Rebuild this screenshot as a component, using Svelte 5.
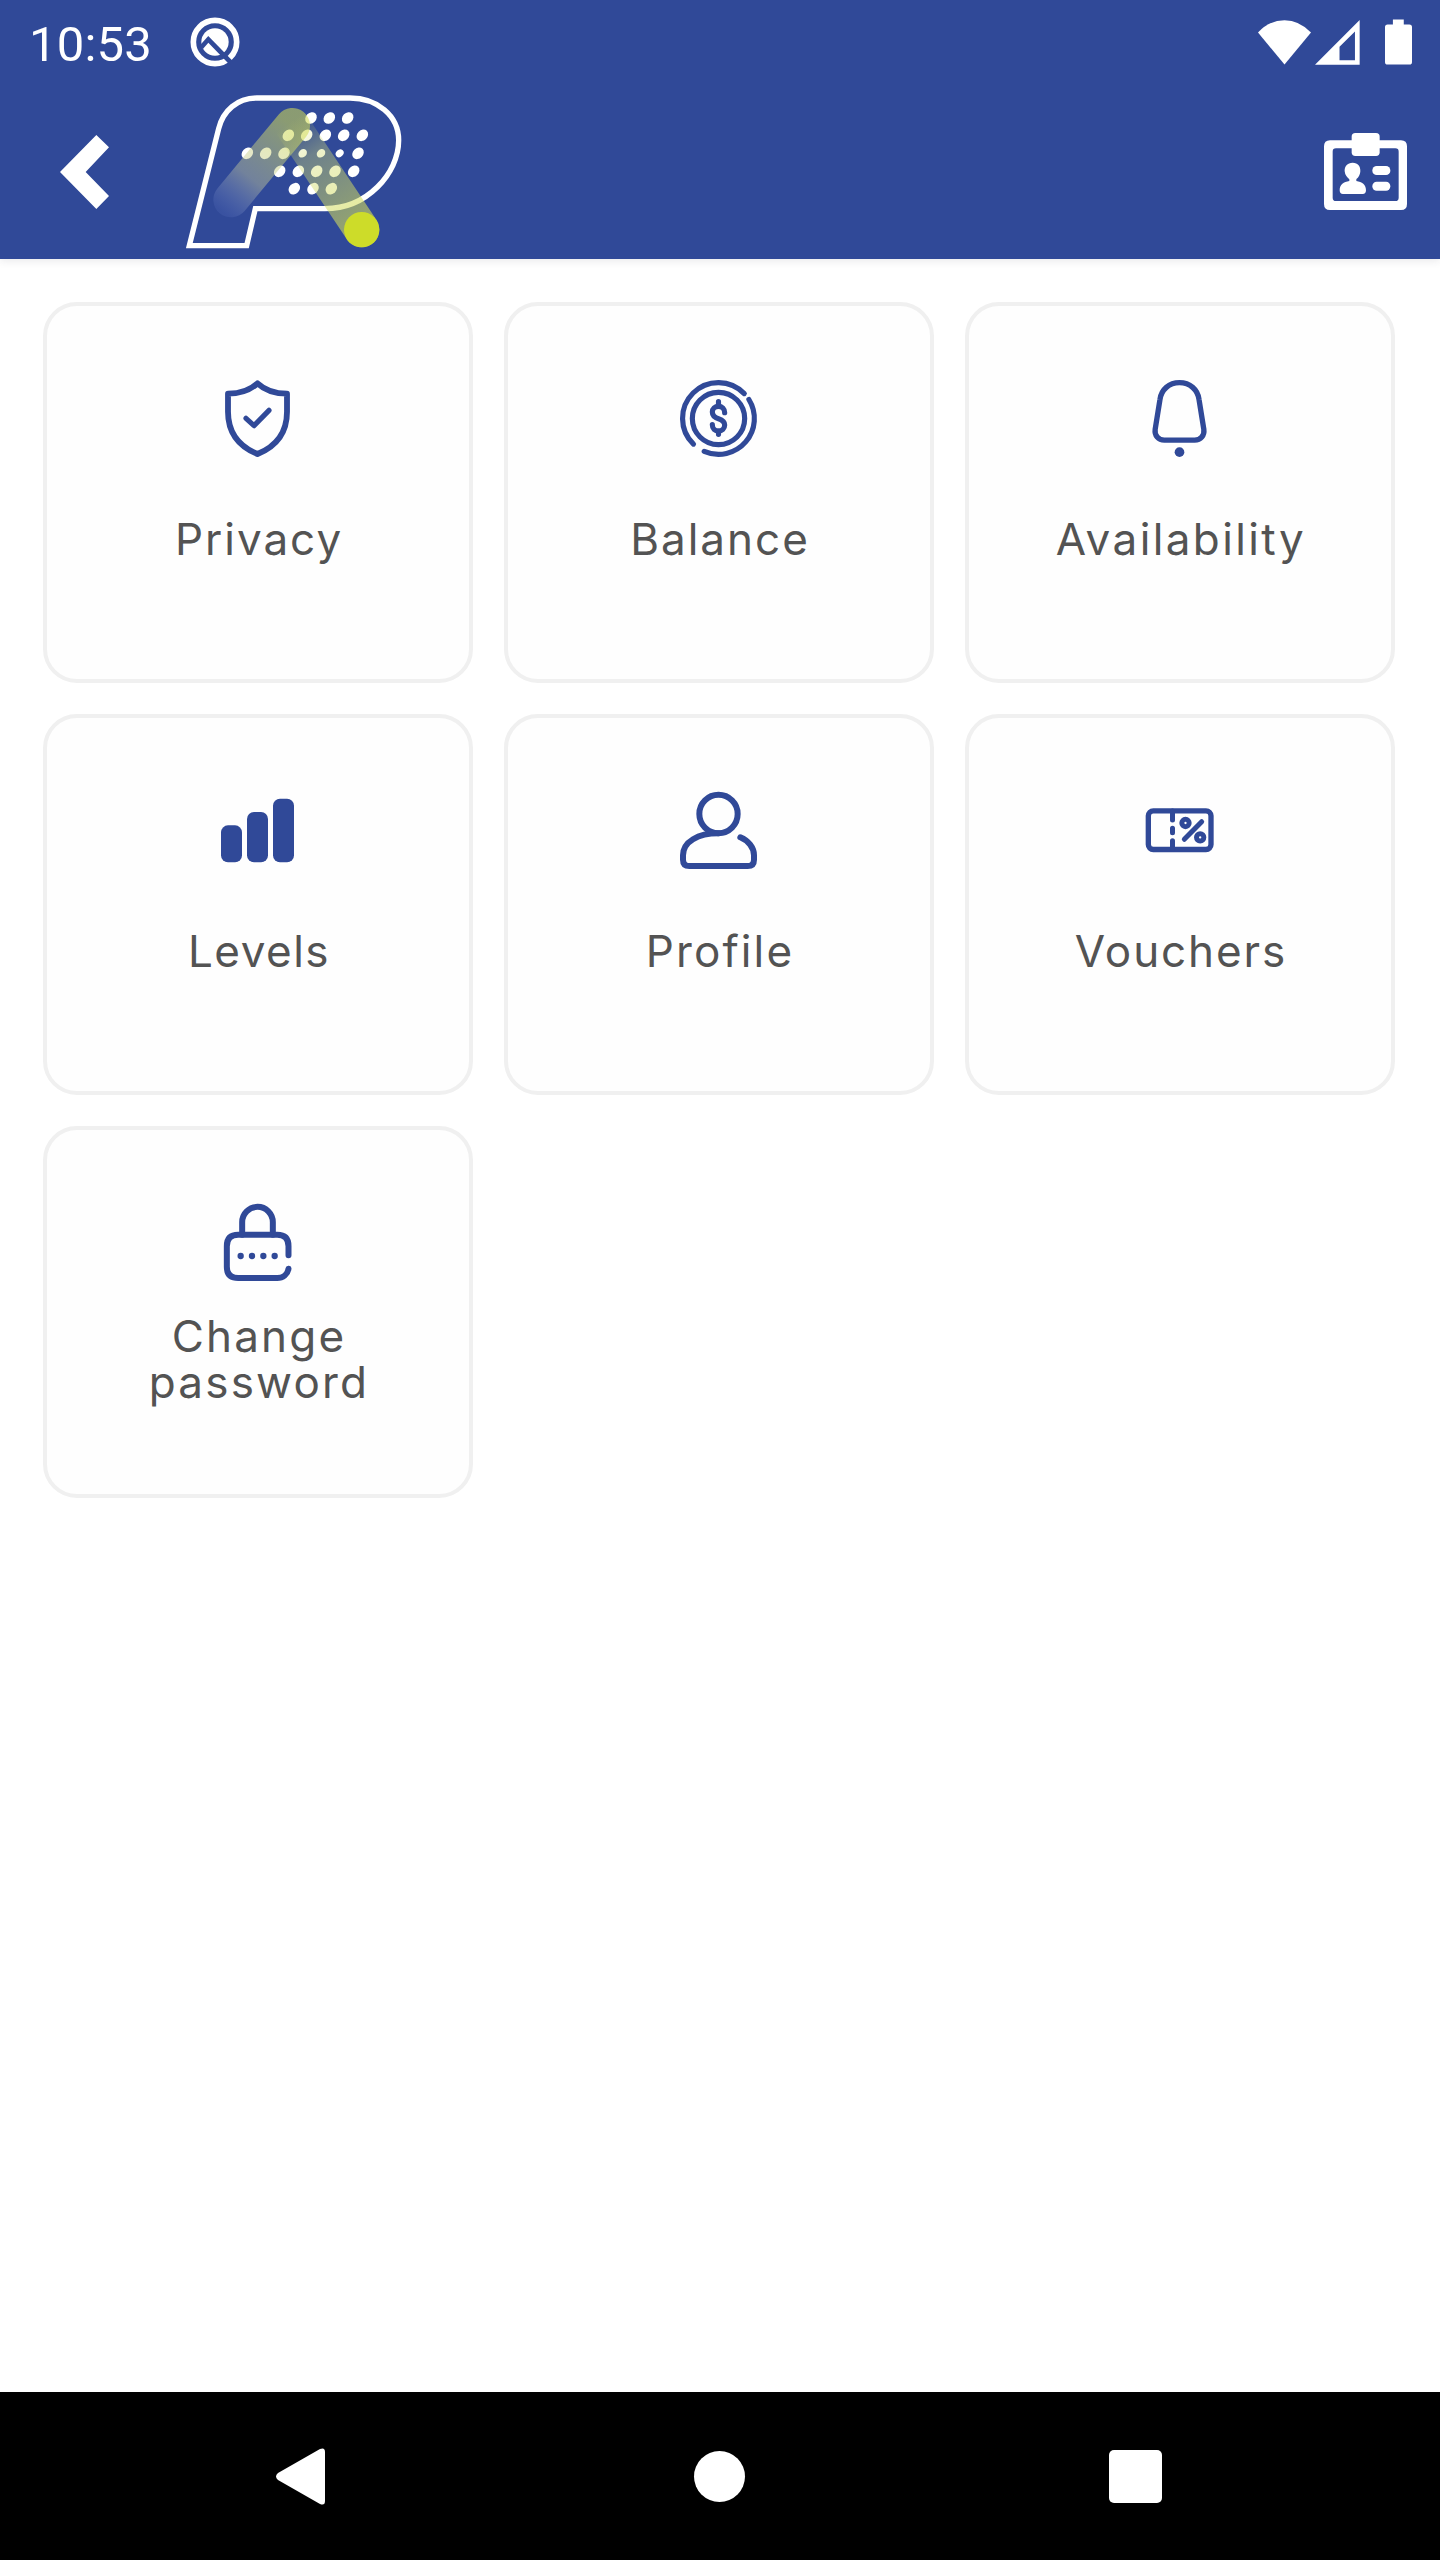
<script lang="ts">
	type Tile = { label: string; icon: string; spacing: number };

	const tiles: Tile[] = [
		{ label: 'Privacy', icon: 'shield', spacing: 2 },
		{ label: 'Balance', icon: 'coin', spacing: 2 },
		{ label: 'Availability', icon: 'bell', spacing: 2.4 },
		{ label: 'Levels', icon: 'bars', spacing: 1.5 },
		{ label: 'Profile', icon: 'user', spacing: 2.1 },
		{ label: 'Vouchers', icon: 'voucher', spacing: 1.9 },
		{ label: 'Change password', icon: 'lock', spacing: 2.2 }
	];

	// x, y, radius
	const dots = [
		[393, 98, 19], [448, 98, 19], [503, 98, 19],
		[325, 150, 19], [380, 150, 19], [436, 150, 19], [491, 150, 19], [547, 150, 19],
		[202, 204, 19], [257, 204, 19], [312, 204, 19], [368, 204, 14], [423, 204, 14], [479, 204, 13], [534, 204, 19],
		[299, 258, 19], [355, 258, 19], [410, 258, 19], [465, 258, 19], [521, 258, 19],
		[343, 310, 19], [399, 310, 19], [454, 310, 19]
	];
</script>

<div class="screen">
	<header>
		<div class="status">
			<span class="time">10:53</span>
			<svg class="q" viewBox="0 0 150 150">
				<circle cx="75" cy="75" r="65" fill="none" stroke="#fff" stroke-width="17" />
				<circle cx="75" cy="75" r="41" fill="#fff" />
				<path d="M34 91L55 67L124 138" fill="none" stroke="#304998" stroke-width="14" />
			</svg>
			<div class="signals">
				<svg width="53" height="45" viewBox="0 0 159 134">
					<path d="M0 37Q35 0 79.500 0Q124 0 159 37L79.500 133Z" fill="#fff" />
				</svg>
				<svg width="45" height="45" viewBox="0 0 134 134">
					<path d="M133 0V133H0ZM119 34L73 80V120H119Z" fill="#fff" fill-rule="evenodd" />
				</svg>
				<svg class="battery" width="27" height="46" viewBox="0 0 82 137">
					<path d="M24 0H57V15H74Q82 15 82 23V129Q82 137 74 137H8Q0 137 0 129V23Q0 15 8 15H24Z" fill="#fff" />
				</svg>
			</div>
		</div>
		<div class="toolbar">
			<svg class="back" viewBox="0 0 147 222">
				<path d="M109 0L147 37L77 111L147 183L109 222L0 111Z" fill="#fff" />
			</svg>
			<svg class="logo" viewBox="0 5 690 510">
				<defs>
					<linearGradient id="left" gradientUnits="userSpaceOnUse" x1="125" y1="378" x2="335" y2="122">
						<stop offset="0" stop-color="#8fa4ee" stop-opacity="0.1" />
						<stop offset="0.4" stop-color="#c3c8a0" stop-opacity="0.45" />
						<stop offset="1" stop-color="#d2dc55" stop-opacity="0.56" />
					</linearGradient>
					<linearGradient id="right" gradientUnits="userSpaceOnUse" x1="325" y1="115" x2="545" y2="433">
						<stop offset="0" stop-color="#d2dc60" stop-opacity="0" />
						<stop offset="0.3" stop-color="#d2dc75" stop-opacity="0.38" />
						<stop offset="1" stop-color="#d2dc55" stop-opacity="0.64" />
					</linearGradient>
				</defs>
				<path
					d="M28 481H200L226 370H435C560 370 656 265 656 165C656 90 590 38 510 38H230C172 38 129 76 116 130Z"
					fill="none"
					stroke="#fff"
					stroke-width="16"
				/>
				{#each dots as [x, y, r]}
					<ellipse cx={x} cy={y} rx={r} ry={r * 0.82} transform="rotate(-45 {x} {y})" fill="#fff" />
				{/each}
				<path d="M153 343L337 121" stroke="url(#left)" stroke-width="106" stroke-linecap="round" />
				<path d="M337 121L545 433" stroke="url(#right)" stroke-width="106" stroke-linecap="round" />
				<circle cx="545" cy="433" r="53" fill="#cddc29" />
			</svg>
			<svg class="badge" viewBox="0 0 249 231">
				<path
					d="M18 22H231Q249 22 249 40V213Q249 231 231 231H18Q0 231 0 213V40Q0 22 18 22ZM36 46Q26 46 26 56V194Q26 204 36 204H214Q224 204 224 194V56Q224 46 214 46Z"
					fill="#fff"
					fill-rule="evenodd"
				/>
				<rect x="83" y="0" width="84" height="69" rx="11" fill="#fff" />
				<path
					d="M86 89C102 89 110 101 109 115C108 128 102 134 97 139V144C114 147 126 154 126 172Q126 183 116 183H57Q47 183 47 172C47 154 59 147 76 144V139C70 134 63 127 62 115C61 101 70 89 86 89Z"
					fill="#fff"
				/>
				<rect x="145" y="99" width="54" height="27" rx="13" fill="#fff" />
				<rect x="145" y="146" width="54" height="27" rx="13" fill="#fff" />
			</svg>
		</div>
	</header>

	<main>
		{#each tiles as tile}
			<div class="tile">
				<svg class="icon" viewBox="0 0 231 231">
					{#if tile.icon === 'shield'}
						<path stroke-width="17.500" d="M115.500 10C93 31 62 41 27 41V95C27 160 62 200 115.500 222C169 200 204 160 204 95V41C169 41 138 31 115.500 10Z" />
						<path stroke-width="15.500" d="M81 115L105 137L150 91" />
					{:else if tile.icon === 'coin'}
						<g stroke-width="15.500">
							<circle cx="115.500" cy="115.500" r="78.500" />
							<path d="M192.800 40.800A107.500 107.500 0 1 0 40.400 192.400" />
							<path d="M206.700 58.500A107.500 107.500 0 0 1 72.600 214.100" />
							<path d="M134 98C134 86 126 79 115.500 79C105 79 97 86 97 96C97 109 106 113 115.500 116C125 119 134 123 134 135C134 146 126 153 115.500 153C105 153 97 146 97 134" />
							<path d="M115.500 65V79M115.500 153V163" />
						</g>
					{:else if tile.icon === 'bell'}
						<path stroke-width="16" d="M115.500 8C84 8 61 29 57 58L42.500 148C40 166 52 180.500 70 180.500H161C179 180.500 191 166 188.500 148L174 58C170 29 147 8 115.500 8Z" />
						<circle class="solid" cx="115.500" cy="216.500" r="14.500" />
					{:else if tile.icon === 'bars'}
						<g class="solid">
							<rect x="6" y="100" width="63" height="111" rx="21" />
							<rect x="84" y="60" width="63" height="151" rx="21" />
							<rect x="162" y="20" width="63" height="191" rx="21" />
						</g>
					{:else if tile.icon === 'user'}
						<g stroke-width="18">
							<circle cx="115.500" cy="66" r="57.500" />
							<path d="M115.500 124C54 124 9 149 9 190V203Q9 222 28 222H203Q222 222 222 203V190C222 167 205 146 181 136" />
						</g>
					{:else if tile.icon === 'voucher'}
						<rect stroke-width="16" x="22" y="56.500" width="188" height="116" rx="15" />
						<path stroke-width="15" d="M94.500 57V84M94.500 109V122M94.500 146V172" />
						<circle stroke-width="15" cx="133.500" cy="93" r="11" />
						<circle stroke-width="15" cx="177.500" cy="136" r="11" />
						<path stroke-width="15" d="M182 89L130 142" />
					{:else}
						<g stroke-width="18">
							<path d="M69.500 92V54.500A46 46 0 0 1 161.500 54.500V92" />
							<path d="M208.500 154V126.500Q208.500 92.500 174.500 92.500H57.500Q23.500 92.500 23.500 126.500V188.500Q23.500 222 57.500 222H174.500C192 222 206 211 208.500 194" />
						</g>
						<g class="solid">
							{#each [65, 99, 133, 167] as x}
								<circle cx={x} cy="156" r="9.500" />
							{/each}
						</g>
					{/if}
				</svg>
				<div class="label" style="letter-spacing: {tile.spacing}px">{tile.label}</div>
			</div>
		{/each}
	</main>

	<nav>
		<svg width="49" height="57" viewBox="0 0 49 57">
			<path d="M2 25L44 1Q49 -1 49 4V53Q49 58 44 56L2 32Q-2 28.500 2 25Z" fill="#fff" />
		</svg>
		<div class="home"></div>
		<div class="recent"></div>
	</nav>
</div>

<style>
	:global(body) {
		margin: 0;
	}

	.screen {
		width: 1440px;
		height: 2560px;
		display: flex;
		flex-direction: column;
		background: #fff;
	}

	svg {
		display: block;
		flex-shrink: 0;
	}

	header {
		height: 259px;
		background: #304998;
		box-shadow: 0 2px 8px rgba(40, 40, 60, 0.1);
	}

	.status {
		height: 84px;
		box-sizing: border-box;
		padding: 0 28px 0 29px;
		display: flex;
		align-items: center;
	}

	.time {
		width: 161px;
		color: #fff;
		font-family: Roboto, sans-serif;
		font-size: 49px;
		letter-spacing: 0.2px;
		line-height: 80px;
		padding-top: 5px;
	}

	.q {
		width: 50px;
		height: 50px;
	}

	.signals {
		margin-left: auto;
		display: flex;
		align-items: center;
		gap: 4px;
	}

	.battery {
		margin-left: 21px;
	}

	.toolbar {
		height: 175px;
		box-sizing: border-box;
		padding: 0 33px 0 60px;
		display: flex;
		align-items: center;
	}

	.back {
		width: 49px;
		height: 74px;
	}

	.logo {
		width: 230px;
		height: 170px;
		margin-left: 71px;
	}

	.badge {
		width: 83px;
		height: 77px;
		margin-left: auto;
	}

	main {
		flex: 1;
		padding: 43px 45px 0 43px;
		display: grid;
		grid-template-columns: repeat(3, 430px);
		grid-template-rows: 381px 381px 372px;
		column-gap: 31px;
		row-gap: 31px;
	}

	.tile {
		box-sizing: border-box;
		border: 4px solid #f0f0f0;
		border-radius: 34px;
		padding: 74px 50px 58px;
		display: flex;
		flex-direction: column;
		align-items: center;
		background: #fefefe;
	}

	.icon {
		width: 77px;
		height: 77px;
		margin-right: 2px;
		overflow: visible;
		fill: none;
		stroke: #304998;
		stroke-linecap: round;
		stroke-linejoin: round;
	}

	.solid {
		fill: #304998;
		stroke: none;
	}

	.label {
		flex: 1;
		max-width: 300px;
		margin-left: 2px;
		display: flex;
		align-items: center;
		text-align: center;
		color: #535353;
		font-family: Inter, sans-serif;
		font-size: 44px;
		font-weight: 400;
		line-height: 46px;
	}

	nav {
		height: 168px;
		box-sizing: border-box;
		padding: 0 278px 0 276px;
		display: flex;
		align-items: center;
		justify-content: space-between;
		background: #000;
	}

	.home {
		width: 51px;
		height: 51px;
		margin-left: 5px;
		border-radius: 50%;
		background: #fff;
	}

	.recent {
		width: 53px;
		height: 53px;
		border-radius: 5px;
		background: #fff;
	}
</style>
